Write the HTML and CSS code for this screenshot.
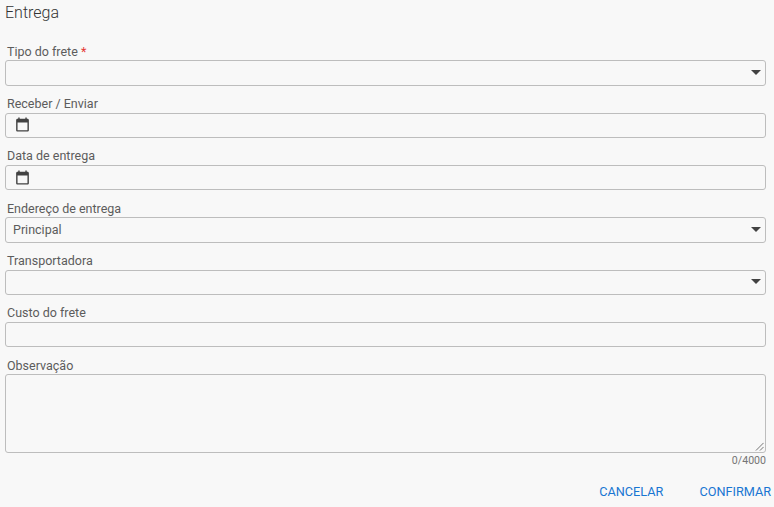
FILE: index.html
```html
<!DOCTYPE html>
<html lang="pt">
<head>
<meta charset="utf-8">
<title>Entrega</title>
<link rel="stylesheet" href="styles.css">
</head>
<body>
<main class="dialog">
  <h1 class="title">Entrega</h1>
  <form class="form">
    <div class="field">
      <label class="label">Tipo do frete <span class="req">*</span></label>
      <div class="box select"><span class="value"></span><svg class="caret" viewBox="0 0 12 6"><path d="M0 0h12L6 6z"/></svg></div>
    </div>
    <div class="field">
      <label class="label">Receber / Enviar</label>
      <div class="box"><svg class="cal" viewBox="0 0 24 24"><path d="M19 4h-1V2h-2v2H8V2H6v2H5c-1.1 0-2 .9-2 2v14c0 1.1.9 2 2 2h14c1.100 0 2-.9 2-2V6c0-1.100-.9-2-2-2zm0 16H5V9h14v11z"/></svg></div>
    </div>
    <div class="field">
      <label class="label">Data de entrega</label>
      <div class="box"><svg class="cal" viewBox="0 0 24 24"><path d="M19 4h-1V2h-2v2H8V2H6v2H5c-1.1 0-2 .9-2 2v14c0 1.1.9 2 2 2h14c1.100 0 2-.9 2-2V6c0-1.100-.9-2-2-2zm0 16H5V9h14v11z"/></svg></div>
    </div>
    <div class="field">
      <label class="label">Endereço de entrega</label>
      <div class="box select"><span class="value">Principal</span><svg class="caret" viewBox="0 0 12 6"><path d="M0 0h12L6 6z"/></svg></div>
    </div>
    <div class="field">
      <label class="label">Transportadora</label>
      <div class="box select"><span class="value"></span><svg class="caret" viewBox="0 0 12 6"><path d="M0 0h12L6 6z"/></svg></div>
    </div>
    <div class="field">
      <label class="label">Custo do frete</label>
      <div class="box"></div>
    </div>
    <div class="field last">
      <label class="label">Observação</label>
      <div class="box area"><svg class="grip" viewBox="0 0 10 10"><path d="M9.500 1 1 9.500M9.500 5.500 5.500 9.500"/></svg></div>
      <div class="counter">0/4000</div>
    </div>
  </form>
  <div class="actions">
    <button class="btn" type="button">CANCELAR</button>
    <button class="btn" type="button">CONFIRMAR</button>
  </div>
</main>
</body>
</html>
```
FILE: styles.css
```css
html, body {
  margin: 0;
  padding: 0;
  height: 507px;
  overflow: hidden;
  background: #f8f8f8;
  font-family: Roboto, "Liberation Sans", sans-serif;
}
.dialog {
  padding: 0 3px 0 5px;
}
.title {
  margin: 0;
  padding-top: 3.500px;
  height: 36px;
  font-size: 16px;
  line-height: 18px;
  font-weight: 300;
  color: #333;
}
.form {
  display: flex;
  flex-direction: column;
  margin-right: 5px;
}
.field {
  display: flex;
  flex-direction: column;
  height: 52.350px;
}
.last {
  height: auto;
}
.label {
  display: block;
  height: 20.800px;
  line-height: 23px;
  padding-left: 2px;
  font-size: 12.500px;
  color: #5c5c5c;
}
.req {
  color: #e53935;
}
.box {
  box-sizing: border-box;
  flex: none;
  height: 25.400px;
  border: 1px solid #bdbdbd;
  border-radius: 3px;
  display: flex;
  align-items: center;
  padding: 0 4px 0 7px;
}
.select {
  justify-content: space-between;
}
.value {
  margin-top: -1px;
  font-size: 12.500px;
  color: #5c5c5c;
}
.caret {
  width: 10px;
  height: 5px;
  margin-top: -1px;
  fill: #424242;
  margin-left: auto;
}
.cal {
  width: 17px;
  height: 17px;
  margin-left: 1px;
  margin-top: -1px;
  fill: #424242;
}
.area {
  height: 79px;
  position: relative;
}
.grip {
  position: absolute;
  right: 1px;
  bottom: 1px;
  width: 9px;
  height: 9px;
  fill: none;
  stroke: #666;
  stroke-width: 1;
}
.counter {
  text-align: right;
  font-size: 10.600px;
  line-height: 16px;
  color: #757575;
}
.actions {
  display: flex;
  justify-content: flex-end;
  gap: 36px;
  margin-top: 15px;
}
.btn {
  padding: 0;
  border: 0;
  background: none;
  font-family: inherit;
  font-size: 12.700px;
  line-height: 16px;
  color: #1976d2;
}
```
